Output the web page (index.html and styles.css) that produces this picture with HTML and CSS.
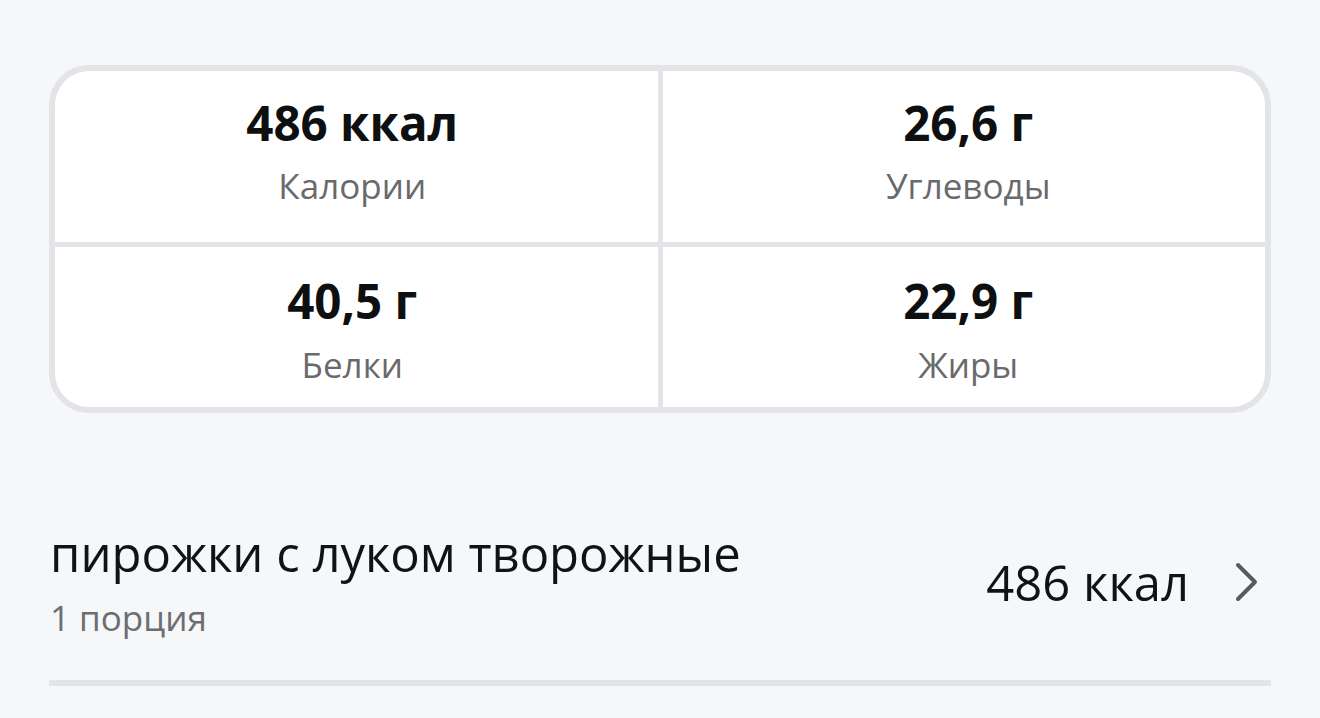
FILE: index.html
```html
<!DOCTYPE html>
<html lang="ru">
<head>
<meta charset="utf-8">
<link rel="stylesheet" href="styles.css">
</head>
<body>
<div class="page">
  <div class="card">
    <div class="cell cell-left">
      <div class="value">486 ккал</div>
      <div class="label">Калории</div>
    </div>
    <div class="cell cell-right">
      <div class="value">26,6 г</div>
      <div class="label">Углеводы</div>
    </div>
    <div class="cell cell-left cell-bottom">
      <div class="value">40,5 г</div>
      <div class="label">Белки</div>
    </div>
    <div class="cell cell-right cell-bottom">
      <div class="value">22,9 г</div>
      <div class="label">Жиры</div>
    </div>
  </div>

  <div class="item">
    <div class="item-text">
      <div class="item-title">пирожки с луком творожные</div>
      <div class="item-sub">1 порция</div>
    </div>
    <div class="item-kcal">486 ккал</div>
    <svg class="chevron" width="26" height="42" viewBox="0 0 26 42" aria-hidden="true">
      <path d="M4 4 L21 21 L4 38" fill="none" stroke="#575a5e" stroke-width="4" stroke-linecap="round" stroke-linejoin="round"/>
    </svg>
  </div>
  <div class="separator"></div>
</div>
</body>
</html>
```
FILE: styles.css
```css
html, body {
  margin: 0;
  padding: 0;
  background: #f6f7f9;
}
body {
  font-family: "Open Sans", "Noto Sans", sans-serif;
  color: #111214;
}
.page {
  padding: 65px 49px 0 49px;
}
.card {
  display: grid;
  grid-template-columns: 1fr 1fr;
  grid-template-rows: 171px 160px;
  gap: 5px;
  background: #e2e4e7;
  border: 6px solid #e2e4e7;
  border-radius: 40px;
  overflow: hidden;
}
.cell {
  background: #ffffff;
  text-align: center;
  padding-top: 22px;
}
.cell-left {
  padding-right: 8px;
}
.cell-right {
  padding-left: 9px;
}
.cell-bottom {
  padding-top: 24px;
}
.value {
  font-size: 47.5px;
  font-weight: 700;
  line-height: 60px;
  color: #0e0f11;
}
.label {
  font-size: 35px;
  line-height: 44px;
  margin-top: 11px;
  color: #696a6c;
}
.cell-bottom .label {
  margin-top: 12px;
}
.item {
  display: flex;
  align-items: center;
  margin-top: 111px;
  padding-left: 1px;
}
.item-text {
  flex: 1;
}
.item-title {
  font-size: 49px;
  font-weight: 500;
  line-height: 58px;
  color: #111214;
}
.item-sub {
  font-size: 35px;
  line-height: 44px;
  margin-top: 14px;
  color: #6c6e71;
}
.item-kcal {
  font-size: 49px;
  line-height: 60px;
  color: #111214;
}
.chevron {
  margin-left: 45px;
  margin-right: 11px;
}
.separator {
  height: 6px;
  background: #e2e4e7;
  margin-top: 40px;
}
```
